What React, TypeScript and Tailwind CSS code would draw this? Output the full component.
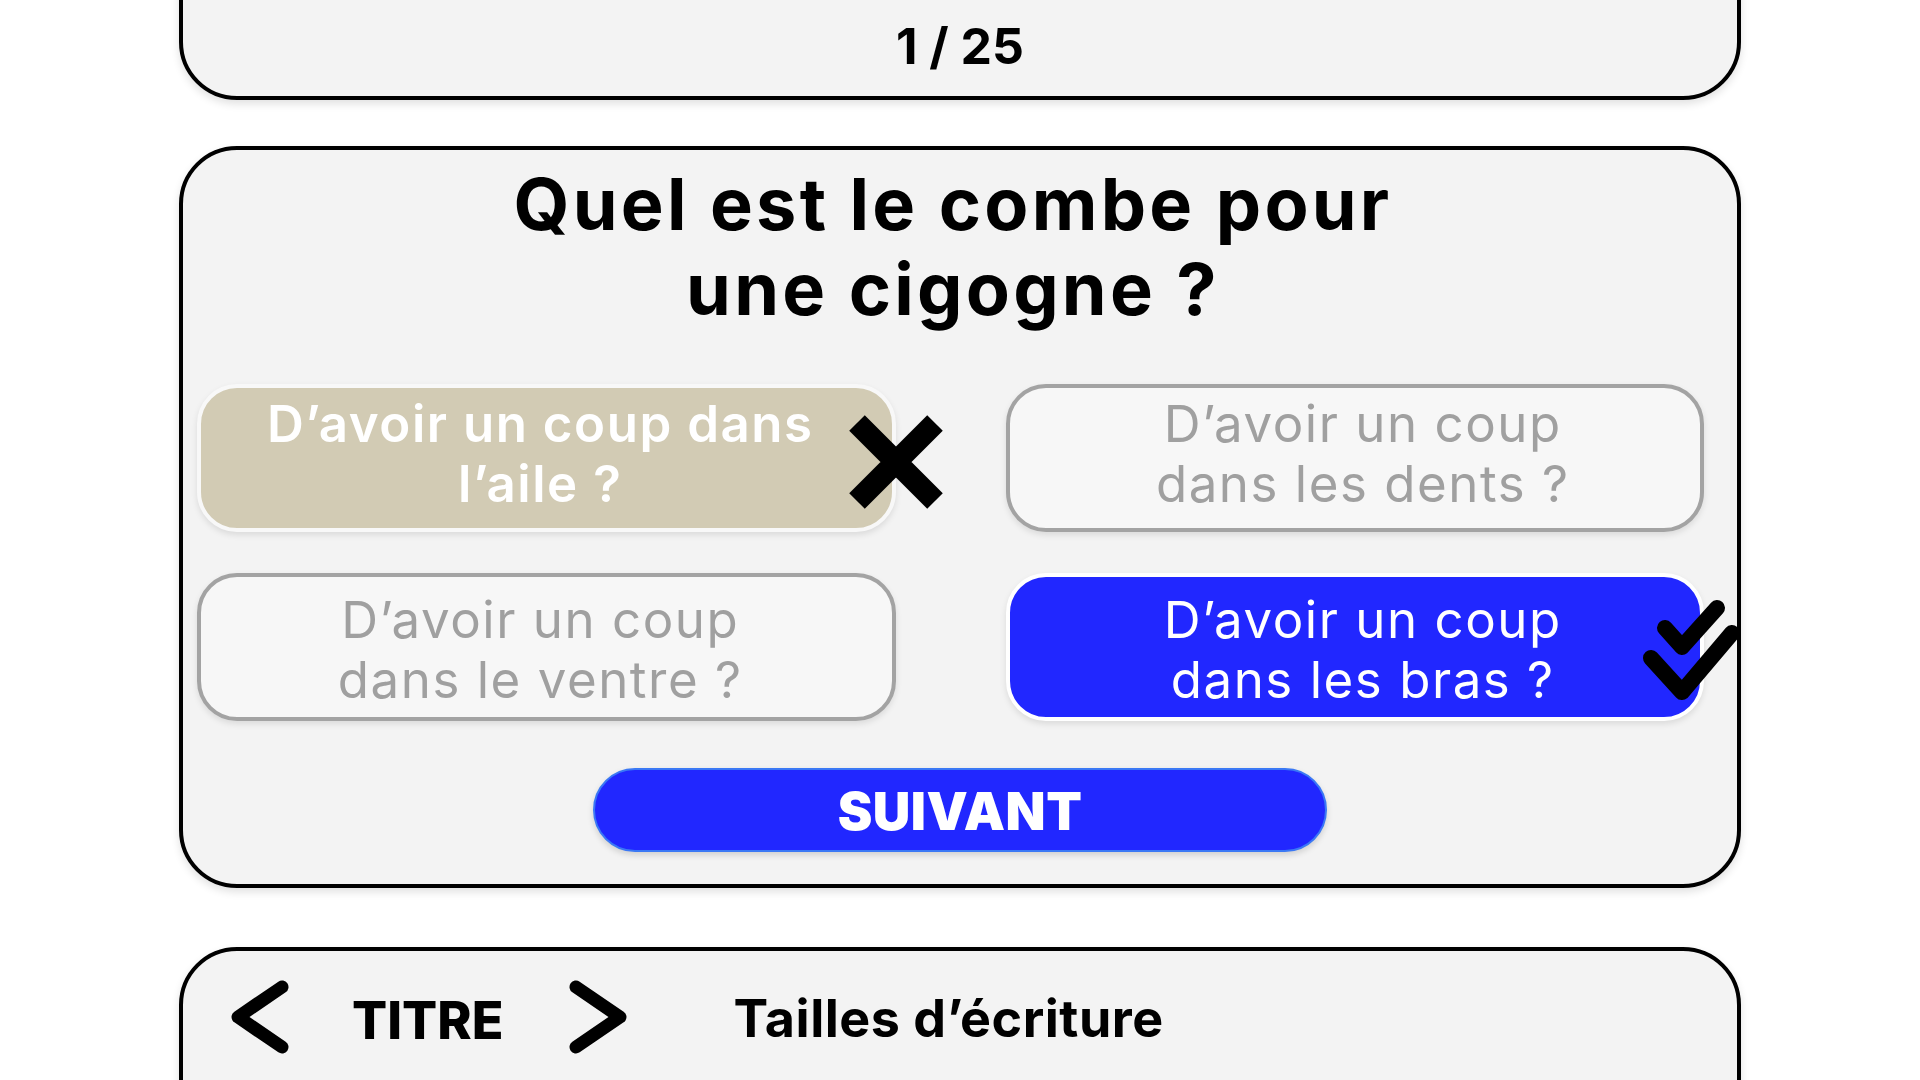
import React from 'react';

const XMark = () => (
  <svg width="94" height="94" viewBox="0 0 94 94" className="absolute right-[-51px] top-[27px]">
    <path d="M8 8 L86 86 M86 8 L8 86" stroke="#000" strokeWidth="22" strokeLinecap="butt" />
  </svg>
);

const DoubleCheck = () => (
  <svg width="100" height="104" viewBox="0 0 100 104" className="absolute right-[-41px] top-[21px]">
    <path
      d="M24 30 L41 49 L76 10 M10 60 L41 94 L91 35"
      fill="none"
      stroke="#000"
      strokeWidth="16"
      strokeLinecap="round"
      strokeLinejoin="round"
    />
  </svg>
);

const Chevron = ({ dir }: { dir: 'left' | 'right' }) => (
  <svg width="58" height="74" viewBox="0 0 58 74">
    <path
      d={dir === 'left' ? 'M51 7 L7 37 L51 67' : 'M7 7 L51 37 L7 67'}
      fill="none"
      stroke="#000"
      strokeWidth="13"
      strokeLinecap="round"
      strokeLinejoin="round"
    />
  </svg>
);

const OPTIONS = [
  { lines: ['D’avoir un coup dans', 'l’aile ?'], state: 'wrong' },
  { lines: ['D’avoir un coup', 'dans les dents ?'], state: 'idle' },
  { lines: ['D’avoir un coup', 'dans le ventre ?'], state: 'idle' },
  { lines: ['D’avoir un coup', 'dans les bras ?'], state: 'right' },
];

export default function App() {
  return (
    <div className="min-h-screen bg-white font-['Inter','Liberation_Sans',sans-serif] text-black flex flex-col items-center overflow-hidden">
      {/* Counter */}
      <div className="w-[1562px] h-[160px] -mt-[60px] bg-[#f3f3f3] border-4 border-black rounded-[58px] shadow-[0_4px_8px_rgba(0,0,0,0.12)] flex items-end justify-center pb-[20px] shrink-0">
        <span className="text-[50px] leading-[60px] font-bold">1 / 25</span>
      </div>

      {/* Question card */}
      <div className="w-[1562px] mt-[46px] bg-[#f3f3f3] border-4 border-black rounded-[58px] shadow-[0_4px_8px_rgba(0,0,0,0.12)] pt-[11px] pb-[32px] flex flex-col items-center shrink-0">
        <h1 className="text-[72px] leading-[85px] font-bold tracking-[0.045em] text-center -ml-[14px]">
          Quel est le combe pour
          <br />
          une cigogne ?
        </h1>

        <div className="self-stretch grid grid-cols-2 gap-x-[110px] gap-y-[41px] pl-[14px] pr-[33px] mt-[53px]">
          {OPTIONS.map((o, i) => {
            const box =
              o.state === 'wrong'
                ? 'bg-[#d2cbb4] border-[#f8f8f8] text-white font-semibold'
                : o.state === 'right'
                ? 'bg-[#2127ff] border-white text-white font-normal'
                : 'bg-[#f7f7f7] border-[#a3a3a3] text-[#a0a0a0] font-normal';
            const shiftY = i < 2 ? 'pb-[8px]' : 'pt-[6px]';
            const shiftX = i % 2 === 0 ? 'pr-[12px]' : 'pl-[16px]';
            return (
              <div
                key={i}
                className={`relative h-[148px] border-4 rounded-[40px] shadow-[0_3px_6px_rgba(0,0,0,0.1)] flex items-center justify-center ${shiftY} ${shiftX} ${box}`}
              >
                <p className="text-[51px] leading-[60px] tracking-[0.03em] text-center whitespace-nowrap">
                  {o.lines[0]}
                  <br />
                  {o.lines[1]}
                </p>
                {o.state === 'wrong' && <XMark />}
                {o.state === 'right' && <DoubleCheck />}
              </div>
            );
          })}
        </div>

        <button
          type="button"
          className="mt-[47px] w-[734px] h-[84px] rounded-full bg-[#2127ff] border-2 border-[#3a78f5] shadow-[0_3px_6px_rgba(0,0,0,0.15)] text-white text-[52px] font-black tracking-[0.01em] flex items-center justify-center pt-[3px]"
        >
          SUIVANT
        </button>
      </div>

      {/* Settings card */}
      <div className="w-[1562px] h-[220px] mt-[59px] bg-[#f3f3f3] border-4 border-black rounded-[58px] shadow-[0_4px_8px_rgba(0,0,0,0.12)] pt-[29px] pl-[48px] shrink-0">
        <div className="flex items-center h-[74px]">
          <Chevron dir="left" />
          <span className="ml-[63px] text-[52px] font-extrabold pt-[8px]">TITRE</span>
          <span className="ml-[66px] flex">
            <Chevron dir="right" />
          </span>
          <span className="ml-[106px] text-[52px] font-bold tracking-[0.01em] pt-[4px]">Tailles d’écriture</span>
        </div>
      </div>
    </div>
  );
}
